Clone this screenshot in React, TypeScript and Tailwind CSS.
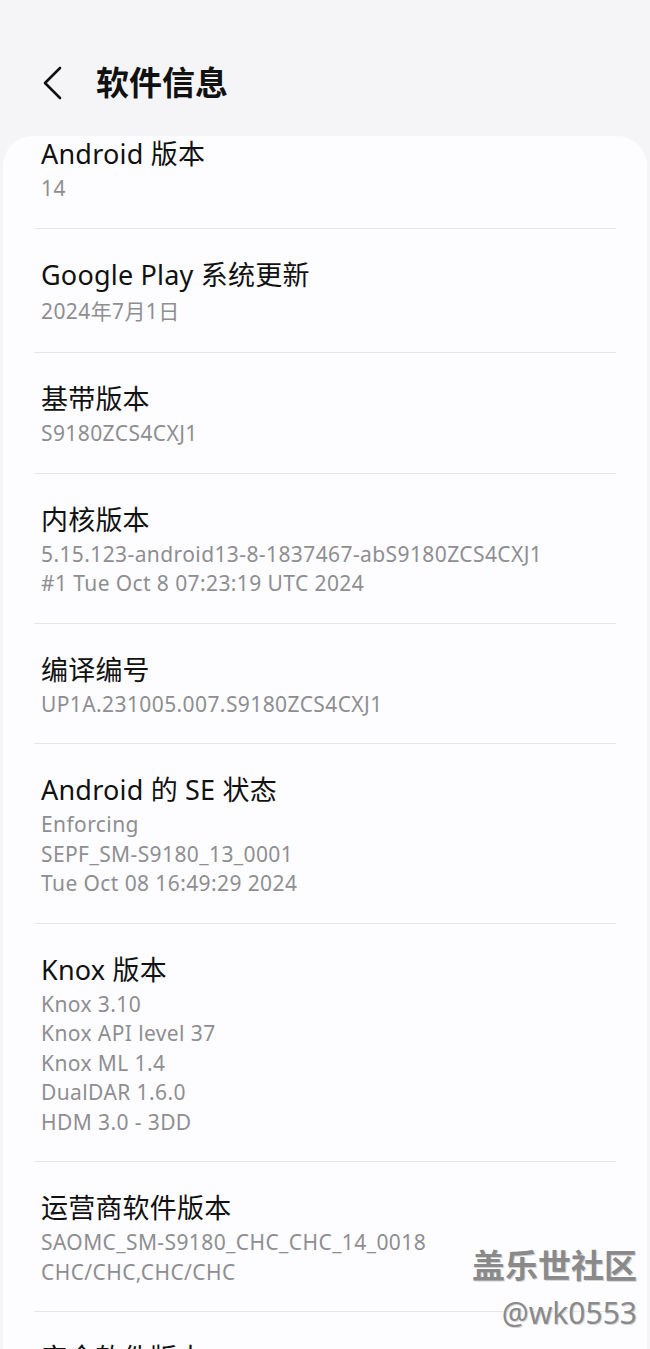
const rows: { title: string; lines: string[]; tall?: boolean }[] = [
  { title: "Google Play 系统更新", lines: ["2024年7月1日"], tall: true },
  { title: "基带版本", lines: ["S9180ZCS4CXJ1"] },
  {
    title: "内核版本",
    lines: ["5.15.123-android13-8-1837467-abS9180ZCS4CXJ1", "#1 Tue Oct 8 07:23:19 UTC 2024"],
  },
  { title: "编译编号", lines: ["UP1A.231005.007.S9180ZCS4CXJ1"] },
  {
    title: "Android 的 SE 状态",
    lines: ["Enforcing", "SEPF_SM-S9180_13_0001", "Tue Oct 08 16:49:29 2024"],
  },
  {
    title: "Knox 版本",
    lines: ["Knox 3.10", "Knox API level 37", "Knox ML 1.4", "DualDAR 1.6.0", "HDM 3.0 - 3DD"],
  },
  {
    title: "运营商软件版本",
    lines: ["SAOMC_SM-S9180_CHC_CHC_14_0018", "CHC/CHC,CHC/CHC"],
  },
  { title: "安全软件版本", lines: ["SMR Oct-2024 Release 1"] },
];

const font = { fontFamily: '"Noto Sans", Roboto, "Noto Sans CJK SC", sans-serif' };
const emboss = { textShadow: "1px 1px 0 #d4d4d4, -1px -1px 0 #ffffff" };

function InfoRow({ title, lines, first, tall }: { title: string; lines: string[]; first?: boolean; tall?: boolean }) {
  const pad = first ? "pt-[3px] pb-[24px]" : tall ? "pt-[31px] pb-[26px]" : "pt-[31px] pb-[24px]";
  return (
    <div className={`mx-[31px] border-b border-[#e6e6ea] ${pad}`}>
      <p className="pl-[7px] text-[27px] leading-[30px] tracking-[0.2px] text-[#111]">{title}</p>
      <div className={`${tall ? "mt-[7px]" : "mt-[5px]"} pl-[7px]`}>
        {lines.map((l) => (
          <p key={l} className="text-[21px] leading-[29.5px] tracking-[0.4px] text-[#8e8e92]">
            {l}
          </p>
        ))}
      </div>
    </div>
  );
}

export default function App() {
  return (
    <div style={font} className="relative h-[1349px] w-[650px] overflow-hidden bg-[#f5f5f8]">
      <div className="flex h-[136px] items-start pt-[60px]">
        <svg width="22" height="34" viewBox="0 0 22 34" className="ml-[41px] mt-[6px]" fill="none">
          <path d="M19 2L4 17l15 15" stroke="#111" strokeWidth="2.6" strokeLinecap="round" strokeLinejoin="round" />
        </svg>
        <h1 className="ml-[33px] text-[33px] font-bold leading-[46px] text-[#111]">软件信息</h1>
      </div>

      <div className="mx-[3px] h-[1300px] overflow-hidden rounded-t-[30px] bg-[#fdfdff]">
        <InfoRow first title="Android 版本" lines={["14"]} />
        {rows.map((r) => (
          <InfoRow key={r.title} title={r.title} lines={r.lines} tall={r.tall} />
        ))}
      </div>

      <div className="absolute right-[13px] top-[1243px] flex flex-col items-end">
        <span className="text-[33px] font-bold leading-[46px] text-[#8a8a8a]" style={emboss}>
          盖乐世社区
        </span>
        <span className="mt-[6px] text-[30px] leading-[36px] text-[#8a8a8a]" style={emboss}>
          @wk0553
        </span>
      </div>
    </div>
  );
}
